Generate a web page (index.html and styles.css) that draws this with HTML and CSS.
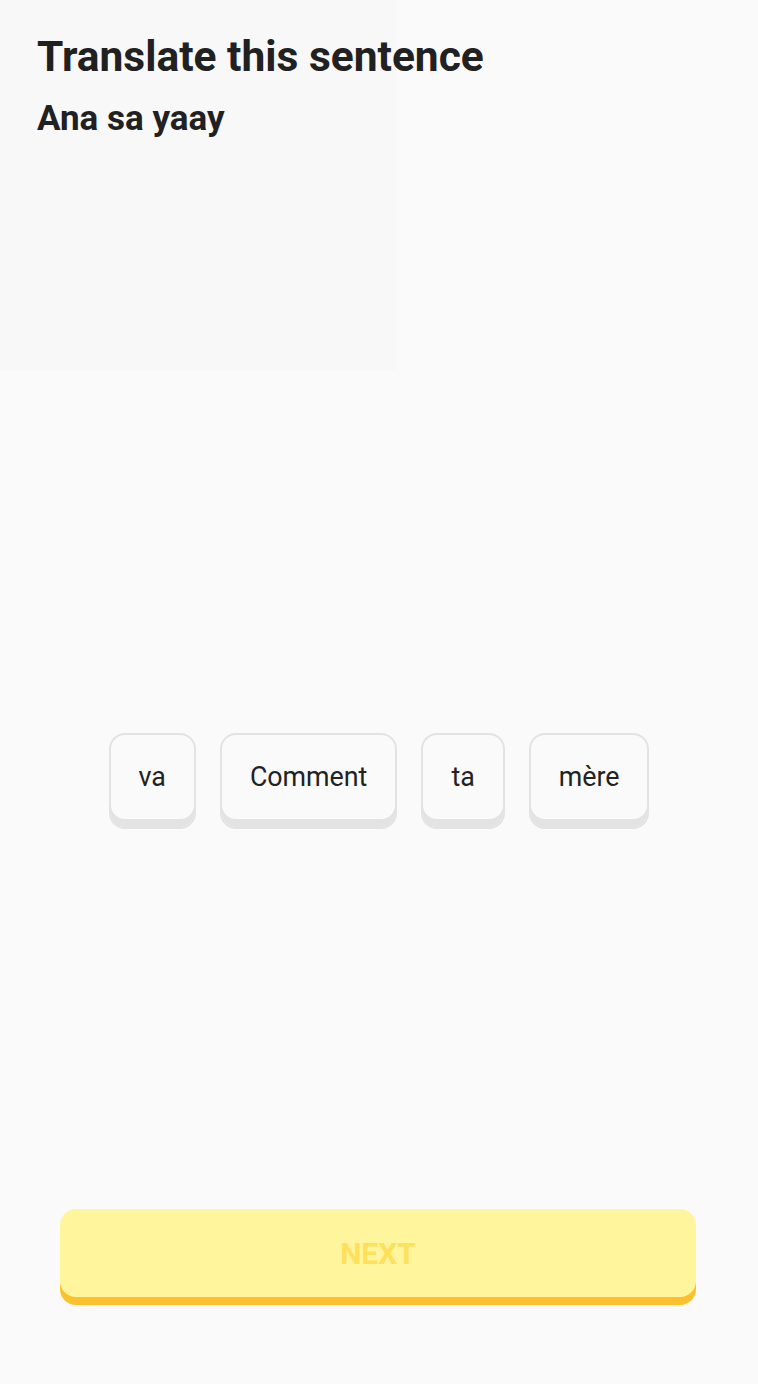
FILE: index.html
```html
<!DOCTYPE html>
<html>
<head>
<meta charset="utf-8">
<link rel="stylesheet" href="styles.css">
</head>
<body>
<div class="screen">
  <div class="ghost"></div>
  <header class="head">
    <h1 class="title">Translate this sentence</h1>
    <h2 class="sentence">Ana sa yaay</h2>
  </header>
  <div class="bank">
    <button class="chip">va</button>
    <button class="chip">Comment</button>
    <button class="chip">ta</button>
    <button class="chip">mère</button>
  </div>
  <div class="footer">
    <button class="next">NEXT</button>
  </div>
</div>
</body>
</html>
```

FILE: styles.css
```css
* { box-sizing: border-box; }
html, body { margin: 0; padding: 0; }
body {
  background: #fafafa;
  font-family: Roboto, "Liberation Sans", sans-serif;
  color: #222222;
}
.screen {
  position: relative;
  width: 758px;
  height: 1384px;
  display: flex;
  flex-direction: column;
}
.ghost {
  position: absolute;
  left: 0;
  top: 0;
  width: 396px;
  height: 370px;
  background: #f8f8f8;
}
.head {
  position: relative;
  padding: 30px 37px 0;
}
.title {
  margin: 0;
  font-size: 42.5px;
  font-weight: 700;
  line-height: 54px;
  color: #212121;
}
.sentence {
  margin: 14px 0 0;
  font-size: 35px;
  font-weight: 700;
  line-height: 42px;
  color: #212121;
}
.bank {
  margin-top: 593px;
  display: flex;
  justify-content: center;
  gap: 24px;
}
.chip {
  height: 96px;
  padding: 0 28px 8px;
  border: 2px solid #e3e3e3;
  border-radius: 16px;
  background: #fafafa;
  box-shadow: inset 0 -8px 0 #e3e3e3;
  font-family: Roboto, "Liberation Sans", sans-serif;
  font-size: 26.8px;
  color: #222222;
  line-height: 1;
}
.footer {
  margin-top: auto;
  padding: 0 62px 79px 60px;
}
.next {
  width: 100%;
  height: 96px;
  border: 0;
  border-radius: 16px;
  background: #fff59d;
  box-shadow: inset 0 -8px 0 #fdc12f;
  padding: 0 0 8px;
  font-family: Roboto, "Liberation Sans", sans-serif;
  font-size: 30px;
  font-weight: 700;
  color: #ffe05a;
}
```
